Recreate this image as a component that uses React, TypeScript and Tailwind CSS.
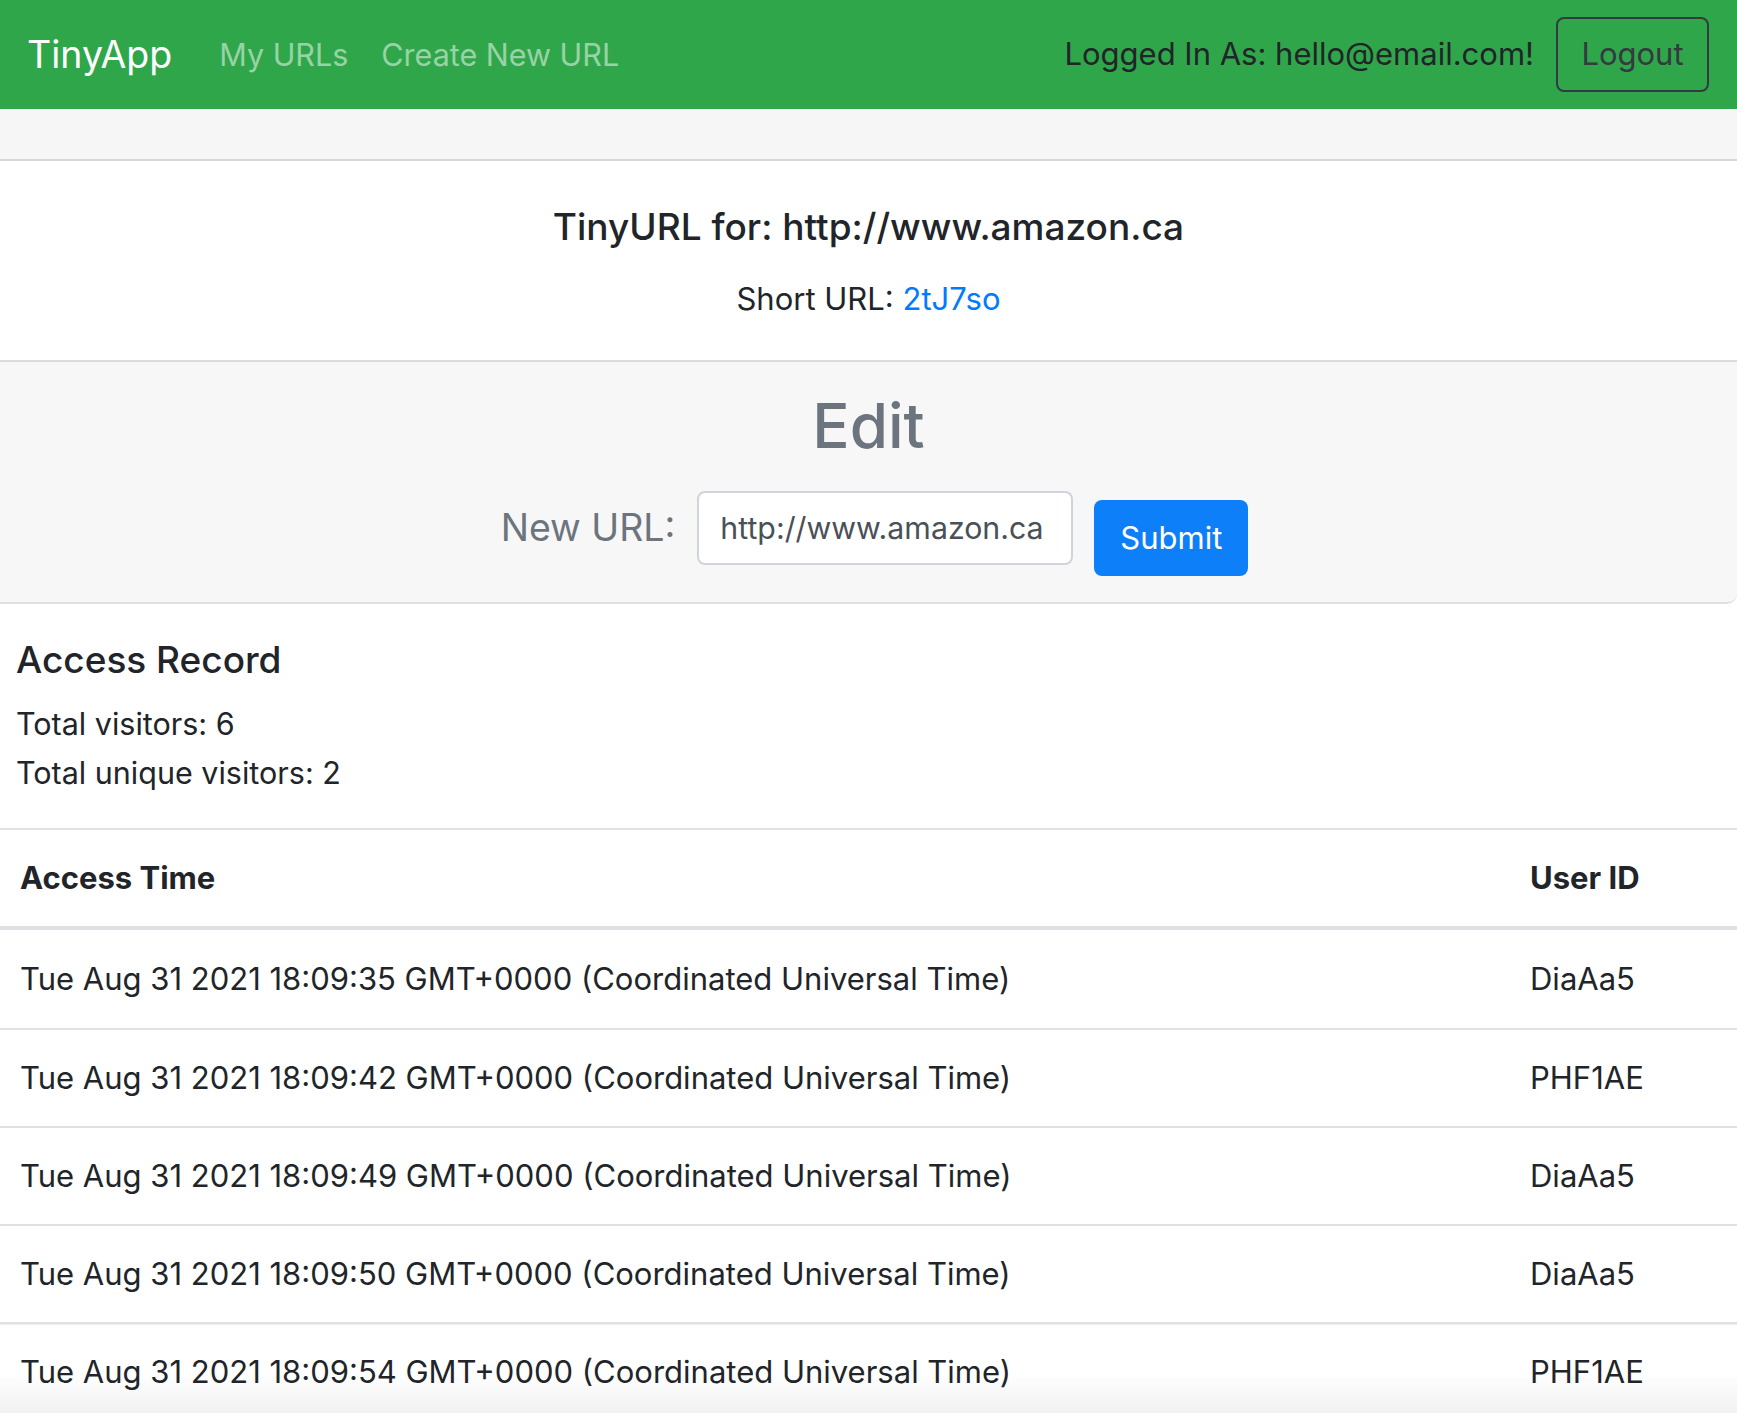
import React from "react"

const visits = [
    { time: "Tue Aug 31 2021 18:09:35 GMT+0000 (Coordinated Universal Time)", user: "DiaAa5" },
    { time: "Tue Aug 31 2021 18:09:42 GMT+0000 (Coordinated Universal Time)", user: "PHF1AE" },
    { time: "Tue Aug 31 2021 18:09:49 GMT+0000 (Coordinated Universal Time)", user: "DiaAa5" },
    { time: "Tue Aug 31 2021 18:09:50 GMT+0000 (Coordinated Universal Time)", user: "DiaAa5" },
    { time: "Tue Aug 31 2021 18:09:54 GMT+0000 (Coordinated Universal Time)", user: "PHF1AE" },
]

const App = () => {
    return (
        <div className="min-h-screen bg-white text-[#212529] font-['Inter','Noto_Sans',sans-serif] overflow-hidden">
            {/* navbar */}
            <nav className="h-[109px] bg-[#30a64b] flex items-center pl-[27px] pr-[28px]">
                <span className="text-[37.5px] text-white leading-[47px]">TinyApp</span>
                <a className="ml-[47px] text-[30.5px] text-[#98d3a5]">My URLs</a>
                <a className="ml-[33px] text-[30.5px] text-[#98d3a5]">Create New URL</a>
                <div className="ml-auto flex items-center">
                    <span className="text-[31px] text-[#212529]">Logged In As: hello@email.com!</span>
                    <button className="ml-[22px] w-[153px] h-[75px] border-2 border-[#343a40] rounded-[8px] text-[31px] text-[#343a40]">
                        Logout
                    </button>
                </div>
            </nav>

            <div className="h-[52px] bg-[#f6f6f6] border-b-2 border-[#d8d8d8]"></div>

            {/* url info */}
            <section className="flex flex-col items-center pt-[42px] pb-[38px] border-b-2 border-[#dcdcdc]">
                <h5 className="text-[37px] font-medium leading-[47px]">TinyURL for: http://www.amazon.ca</h5>
                <p className="mt-[25px] text-[31px] leading-[47px]">
                    Short URL: <a className="text-[#007bff]">2tJ7so</a>
                </p>
            </section>

            {/* edit */}
            <section className="bg-[#f7f7f7] pt-[27px] pb-[26px] border-b-2 border-[#dee2e6] rounded-br-[10px]">
                <h2 className="text-center text-[62px] font-medium leading-[74px] text-[#6c757d]">Edit</h2>
                <form className="mt-[28px] flex justify-center items-start pl-[12px]">
                    <label className="h-[74px] flex items-center text-[37.5px] text-[#6c757d]">New URL:</label>
                    <input
                        className="ml-[22px] w-[376px] h-[74px] bg-white border-2 border-[#ced4da] rounded-[8px] px-[21px] text-[30.3px] text-[#495057] outline-none"
                        defaultValue="http://www.amazon.ca"
                    />
                    <button type="button" className="ml-[21px] mt-[9px] w-[154px] h-[76px] bg-[#0d7ff8] rounded-[8px] text-[31px] text-white">
                        Submit
                    </button>
                </form>
            </section>

            {/* access record */}
            <section className="px-[16px] pt-[34px] pb-[31px]">
                <h5 className="text-[37px] font-medium leading-[44px]">Access Record</h5>
                <p className="mt-[17px] text-[30.5px] leading-[49px]">Total visitors: 6</p>
                <p className="text-[30.5px] leading-[49px]">Total unique visitors: 2</p>
            </section>

            <table className="w-full text-[31px]">
                <thead>
                    <tr className="border-t-2 border-b-4 border-[#dee2e6]">
                        <th className="h-[99px] pl-[20px] text-left font-bold">Access Time</th>
                        <th className="h-[99px] w-[230px] pl-[23px] text-left font-bold">User ID</th>
                    </tr>
                </thead>
                <tbody>
                    {visits.map((v, i) => (
                        <tr
                            key={i}
                            className={i === 0 ? "" : i === visits.length - 1
                                ? "border-t-2 border-[#dee2e6] bg-gradient-to-b from-white via-white to-[#eeeeee]"
                                : "border-t-2 border-[#dee2e6]"}
                        >
                            <td className={i === 0 ? "h-[101px] pl-[20px]" : "h-[98px] pl-[20px]"}>{v.time}</td>
                            <td className={i === 0 ? "h-[101px] pl-[23px]" : "h-[98px] pl-[23px]"}>{v.user}</td>
                        </tr>
                    ))}
                </tbody>
            </table>
        </div>
    )
}

export default App
